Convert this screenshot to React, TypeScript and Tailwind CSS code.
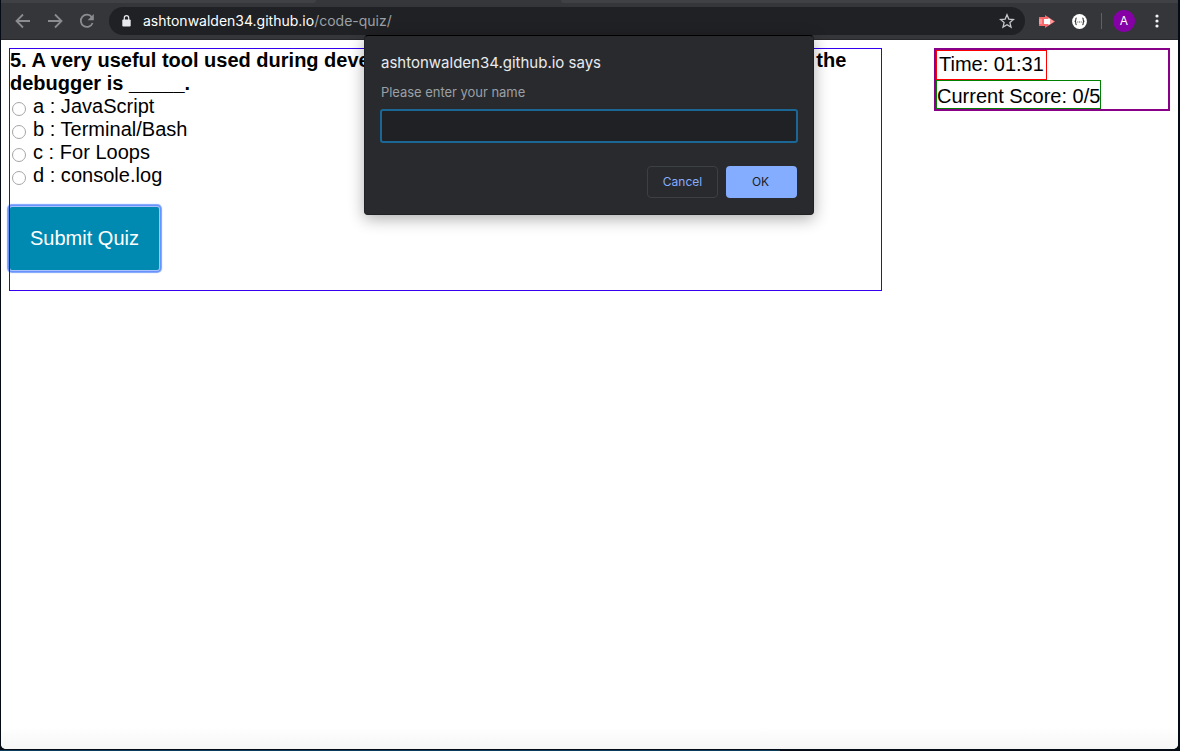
import React from "react";

const answers = ["a : JavaScript", "b : Terminal/Bash", "c : For Loops", "d : console.log"];

function Toolbar() {
  return (
    <header className="h-10 shrink-0 border-b border-[#28282b] bg-[#35363a] font-['Inter',sans-serif]">
      <div className="flex h-[3px] bg-[#36373b]">
        <div className="w-[315px] rounded-br bg-[#404145]" />
        <div className="ml-[245px] flex-1 rounded-bl bg-[#404145]" />
      </div>
      <div className="flex h-9 items-center">
        <svg className="ml-[14px] size-4 shrink-0" viewBox="0 0 16 16" fill="none" stroke="#8b8c8f" strokeWidth="1.8">
          <path d="M15 8H2M8 1.5 1.5 8 8 14.5" />
        </svg>
        <svg className="ml-4 size-4 shrink-0" viewBox="0 0 16 16" fill="none" stroke="#8b8c8f" strokeWidth="1.8">
          <path d="M1 8h13M8 1.5 14.5 8 8 14.5" />
        </svg>
        <svg className="ml-4 size-4 shrink-0" viewBox="0 0 16 16">
          <path d="M12.8 4.1A6.1 6.1 0 1 0 13.6 10" fill="none" stroke="#8b8c8f" strokeWidth="1.8" />
          <path d="M14.8 1v6.2H8.6z" fill="#8b8c8f" />
        </svg>
        <div className="ml-[14px] flex h-7 w-[916px] items-center rounded-full bg-[#202124] pr-[10px] pl-[13px]">
          <svg className="h-3 w-[9px] shrink-0" viewBox="0 0 9 12">
            <rect x="0.3" y="4.5" width="8.4" height="7" rx="1" fill="#e8eaed" />
            <path d="M2.3 5V2.9a2.2 2.2 0 0 1 4.4 0V5" fill="none" stroke="#e8eaed" strokeWidth="1.2" />
          </svg>
          <p className="ml-[12px] flex-1 text-[14px] leading-5 whitespace-nowrap text-[#9aa0a6]">
            <span className="text-white">ashtonwalden34.github.io</span>/code-quiz/
          </p>
          <svg className="size-4" viewBox="0 0 16 16" fill="none" stroke="#c6c7ca" strokeWidth="1.3">
            <path d="m8 1.8 1.8 4.3 4.7.4-3.6 3.1 1.1 4.5L8 11.7l-4 2.4 1.1-4.5L1.5 6.5l4.7-.4z" />
          </svg>
        </div>
        <svg className="ml-[14px] h-[13px] w-4 shrink-0" viewBox="0 0 16 13">
          <path d="M0 2h6V0l10 6.500L6 13v-2H0z" fill="#f8696d" />
          <path d="M0 4h3v5H0z" fill="#fc9699" />
          <path d="M5 4h4.500V2.800L14 6.500 9.500 10.200V9H5z" fill="#fff" />
          <path d="M11 4.200 15 6.500 11 9z" fill="#fb9b9e" />
        </svg>
        <svg className="ml-[17px] size-[15px] shrink-0" viewBox="0 0 15 15">
          <circle cx="7.5" cy="7.5" r="7.4" fill="#fff" />
          <path d="M4.700 4c-1.200 0-.8 1.200-.9 2 0 .9-.4 1.300-1.100 1.400.7.100 1.100.5 1.100 1.300.1.900-.3 2 .9 2M10.300 4c1.200 0 .8 1.200.9 2 0 .9.4 1.300 1.100 1.400-.7.100-1.100.5-1.100 1.300-.1.900.3 2-.9 2" fill="none" stroke="#333" strokeWidth="1.100" />
          <path d="M5.300 7.500h1v1h-1zM7 7.500h1v1H7zM8.700 7.500h1v1h-1z" fill="#555" />
        </svg>
        <div className="ml-[14px] h-4 w-px bg-[#606165]" />
        <div className="ml-[11px] flex size-[22px] items-center justify-center rounded-full bg-[#8500a5] text-[12px] text-white">A</div>
        <svg className="ml-[20px] h-[14px] w-1" viewBox="0 0 4 14" fill="#f1f3f4">
          <circle cx="2" cy="2" r="1.6" />
          <circle cx="2" cy="7" r="1.6" />
          <circle cx="2" cy="12" r="1.6" />
        </svg>
      </div>
    </header>
  );
}

function NameDialog() {
  return (
    <div className="absolute top-[35px] left-[364px] flex h-[180px] w-[450px] flex-col rounded border border-t-black border-x-[#202124] border-b-[#202124] bg-[#292a2d] px-[15px] font-['Inter',sans-serif] shadow-[0_4px_16px_rgba(0,0,0,0.32)]">
      <h1 className="mt-[17px] pl-px text-[15px] leading-5 whitespace-nowrap text-[#e8eaed]">ashtonwalden34.github.io says</h1>
      <label htmlFor="name" className="mt-[10px] pl-px text-[13px] leading-[18px] tracking-[-0.04px] text-[#9aa0a6]">Please enter your name</label>
      <input id="name" className="mt-[8px] h-[34px] w-[418px] shrink-0 rounded-[3px] border-2 border-[#1a6796] bg-[#202124] px-2 text-white outline-none" />
      <div className="mt-[23px] flex justify-end gap-2 pr-px text-[12px]">
        <button className="h-8 w-[71px] rounded border border-[#3c4043] text-[#85adff]">Cancel</button>
        <button className="h-8 w-[71px] rounded bg-[#85adff] pr-[2px] text-[#202124]">OK</button>
      </div>
    </div>
  );
}

export default function App() {
  return (
    <div className="relative flex h-[751px] w-[1180px] flex-col overflow-hidden bg-[#050b14] pr-[2px] pb-[2px] pl-px font-['Liberation_Sans',Arial,sans-serif]">
      <div className="flex min-h-0 flex-1 flex-col overflow-hidden rounded-b-[5px] bg-white">
        <Toolbar />
        <main className="isolate flex flex-1 items-start bg-linear-to-b from-white from-97% to-[#f5f5f5] pt-2 pl-2 text-[20px] leading-[23px] text-black">
          <section className="h-[243px] w-[873px] border border-[#3500f0]">
            <h2 className="font-bold">
              <span className="block whitespace-nowrap">5. A very useful tool used during development and debugging for printing content to the</span>
              <span className="block">debugger is _____.</span>
            </h2>
            {answers.map((answer) => (
              <label key={answer} className="flex h-[23px] items-center">
                <span className="mt-[5px] ml-[2px] size-[14px] rounded-full border border-[#a6a6a6] bg-white" />
                <span className="ml-[7px] tracking-[0.02px]">{answer}</span>
              </label>
            ))}
            <button className="relative -z-10 mt-[20px] h-[63px] w-[149px] rounded-[2px] bg-[#008ab1] text-white shadow-[0_0_0_1px_#a9c1fc,0_0_0_2px_#6992fa,0_0_1px_3px_#7ca2ff]">Submit Quiz</button>
          </section>
          <aside className="ml-[52px] h-[63px] w-[236px] border-2 border-[#880088]">
            <div className="flex h-[30px] w-[111px] items-center border border-[#f00] pb-[2px] pl-[2px]">Time: 01:31</div>
            <div className="flex h-[29px] w-[165px] items-center border border-[#008000] pt-[4px] whitespace-nowrap">Current Score: 0/5</div>
          </aside>
        </main>
      </div>
      <div className="absolute bottom-0 left-0 h-px w-[780px] bg-[#0d3d5c]" />
      <NameDialog />
    </div>
  );
}
